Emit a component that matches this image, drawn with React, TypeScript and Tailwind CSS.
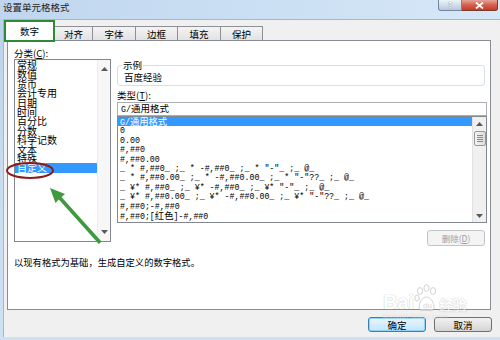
import React from "react";

const mono = "font-['Liberation_Mono','Noto_Sans_CJK_SC',monospace]";

function Up() {
  return (
    <svg width="7" height="4" viewBox="0 0 7 4">
      <polygon points="0,4 7,4 3.5,0" fill="#5a5a5a" />
    </svg>
  );
}
function Down() {
  return (
    <svg width="7" height="4" viewBox="0 0 7 4">
      <polygon points="0,0 7,0 3.5,4" fill="#5a5a5a" />
    </svg>
  );
}

export default function App() {
  const cats = ["常规", "数值", "货币", "会计专用", "日期", "时间", "百分比", "分数", "科学记数", "文本", "特殊", "自定义"];
  const fmts: React.ReactNode[] = [
    <>
      G/<span className="font-['Noto_Sans_CJK_SC',sans-serif] text-[9.3px]">通用格式</span>
    </>,
    "0",
    "0.00",
    "#,##0",
    "#,##0.00",
    '_ * #,##0_ ;_ * -#,##0_ ;_ * "-"_ ;_ @_ ',
    '_ * #,##0.00_ ;_ * -#,##0.00_ ;_ * "-"??_ ;_ @_ ',
    '_ ¥* #,##0_ ;_ ¥* -#,##0_ ;_ ¥* "-"_ ;_ @_ ',
    '_ ¥* #,##0.00_ ;_ ¥* -#,##0.00_ ;_ ¥* "-"??_ ;_ @_ ',
    "#,##0;-#,##0",
    <>
      #,##0;[<span className="font-['Noto_Sans_CJK_SC',sans-serif] text-[9.3px]">红色</span>]-#,##0
    </>,
  ];
  const tabs: [string, string][] = [
    ["对齐", "w-[38px]"],
    ["字体", "w-[43px]"],
    ["边框", "w-[42px]"],
    ["填充", "w-[43px]"],
    ["保护", "w-[42px]"],
  ];

  return (
    <div className="relative w-[500px] h-[340px] overflow-hidden bg-gradient-to-b from-[#b9d1ea] via-[#c8dcf0] to-[#cfe1f3] font-['Noto_Sans_CJK_SC',sans-serif] text-black">
      {/* Title bar */}
      <div className="h-[19px] flex items-start bg-gradient-to-r from-[#c0d6ee] via-[#cadff3] to-[#d6e7f7]">
        <div className="pl-[3px] pt-[1px] text-[9.5px] leading-[12px] text-[#1e1e1e]">设置单元格格式</div>
        <div className="ml-auto mr-[2px] flex">
          <div className="w-[24px] h-[11px] border border-[#71869f] border-t-0 rounded-bl-[3px] bg-gradient-to-b from-[#eef3f8] to-[#b7c8db] flex items-center justify-center text-[8px] leading-none font-bold text-white [text-shadow:0_0_1px_#3b4a5e]">
            ?
          </div>
          <div className="w-[36px] h-[11px] border border-l-0 border-t-0 border-[#7b3b31] rounded-br-[3px] bg-gradient-to-b from-[#e6a496] via-[#d2604c] to-[#c23c27] flex items-center justify-center">
            <svg width="9" height="7" viewBox="0 0 9 7">
              <path d="M1 0.5 L8 6.5 M8 0.5 L1 6.5" stroke="#ffffff" strokeWidth="1.8" />
            </svg>
          </div>
        </div>
      </div>

      {/* Client area */}
      <div className="ml-[3px] h-[318px] bg-[#f0f0f0] border-l border-t border-[#a3b7cd] flex flex-col">
        {/* Tabs */}
        <div className="h-[20px] flex items-start relative z-10">
          <div className="w-[51px] h-[22px] border-2 border-[#2f8a36] bg-white flex items-center justify-center text-[9.5px] leading-[12px]">
            数字
          </div>
          {tabs.map(([t, w], i) => (
            <div
              key={t}
              className={`${w} mt-[6px] h-[14px] border-t border-r ${i === 0 ? "border-l-0" : ""} border-[#8e9096] bg-gradient-to-b from-[#f4f4f4] to-[#e2e2e2] flex items-center justify-center text-[9.5px] leading-[12px]`}
            >
              {t}
            </div>
          ))}
        </div>

        {/* Panel */}
        <div className="ml-[3px] w-[484px] h-[270px] border border-[#898c95] bg-white pl-[6px] pt-[6px] flex flex-col">
          <div className="flex gap-[6px] items-start">
            {/* Left column */}
            <div className="w-[97px] flex flex-col">
              <div className="h-[12px] text-[9.5px] leading-[12px]">
                分类(<span className="underline">C</span>):
              </div>
              <div className="h-[183px] border border-[#828790] flex">
                <div className="w-[82px] flex flex-col">
                  {cats.map((c) => (
                    <div
                      key={c}
                      className={`h-[9.4px] leading-[9.4px] text-[10px] pl-[2px] whitespace-nowrap ${c === "自定义" ? "bg-[#3399ff] text-white" : ""}`}
                    >
                      {c}
                    </div>
                  ))}
                </div>
                <div className="w-[13px] bg-[#f7f7f7] border-l border-[#ececec] flex flex-col justify-between items-center py-[7px]">
                  <Up />
                  <Down />
                </div>
              </div>
            </div>

            {/* Right column */}
            <div className="w-[370px] flex flex-col">
              <div className="relative mt-[18px] w-[368px] h-[21px] border border-[#d5dfe5] rounded-[3px] pt-[5px] pl-[6px] text-[9.5px] leading-[12px]">
                <span className="absolute -top-[7px] left-[4px] bg-white px-[1px] leading-[12px]">示例</span>
                百度经验
              </div>
              <div className="mt-[3px] h-[12px] text-[9.5px] leading-[12px]">
                类型(<span className="underline">T</span>):
              </div>
              <div className="mt-[1px] h-[14px] border border-[#abadb3] pl-[3px] text-[8.3px] leading-[12px] flex items-center">
                <span className={mono}>
                  G/<span className="font-['Noto_Sans_CJK_SC',sans-serif] text-[9.5px]">通用格式</span>
                </span>
              </div>
              <div className="h-[107px] border border-[#828790] flex overflow-hidden">
                <div className="w-[354px] flex flex-col overflow-hidden">
                  {fmts.map((f, i) => (
                    <div
                      key={i}
                      className={`${mono} h-[9.4px] leading-[9.4px] text-[8.3px] pl-[2px] whitespace-pre ${i === 0 ? "bg-[#3399ff] text-white" : ""}`}
                    >
                      {f}
                    </div>
                  ))}
                </div>
                <div className="w-[14px] bg-[#f0f0f0] border-l border-[#e2e2e2] flex flex-col items-center">
                  <div className="h-[14px] flex items-center justify-center">
                    <Up />
                  </div>
                  <div className="w-[12px] h-[15px] rounded-[2px] border border-[#9a9a9a] bg-gradient-to-r from-[#f3f3f3] to-[#dcdcdc] flex flex-col items-center justify-center gap-[1px]">
                    <div className="w-[6px] h-px bg-[#8a8a8a]" />
                    <div className="w-[6px] h-px bg-[#8a8a8a]" />
                    <div className="w-[6px] h-px bg-[#8a8a8a]" />
                    <div className="w-[6px] h-px bg-[#8a8a8a]" />
                  </div>
                  <div className="flex-1" />
                  <div className="h-[13px] flex items-center justify-center">
                    <Down />
                  </div>
                </div>
              </div>
              <div className="mt-[7px] mr-[2px] self-end w-[58px] h-[16px] border border-[#c2c4c8] rounded-[3px] bg-[#f4f4f4] flex items-center justify-center text-[8.5px] leading-[12px] text-[#a0a0a0]">
                删除(<span className="underline">D</span>)
              </div>
            </div>
          </div>
          <div className="mt-[10px] text-[9.3px] leading-[12px] whitespace-nowrap">
            以现有格式为基础，生成自定义的数字格式。
          </div>
        </div>

        {/* Buttons */}
        <div className="mt-[7px] pr-[8px] flex justify-end gap-[8px]">
          <div className="w-[58px] h-[15px] border border-[#3c7fb1] rounded-[3px] bg-gradient-to-b from-[#eaf6fd] to-[#bee6fd] shadow-[inset_0_0_0_1px_#8fd2f5] flex items-center justify-center text-[9.5px] leading-[12px]">
            确定
          </div>
          <div className="w-[58px] h-[15px] border border-[#707070] rounded-[3px] bg-gradient-to-b from-[#f2f2f2] to-[#d4d4d4] flex items-center justify-center text-[9.5px] leading-[12px]">
            取消
          </div>
        </div>
      </div>

      {/* Annotations */}
      <svg className="absolute left-0 top-0 pointer-events-none" width="500" height="340" viewBox="0 0 500 340">
        <ellipse cx="30" cy="170.5" rx="23" ry="7.5" fill="none" stroke="#8b1a1a" strokeWidth="2" />
        <polygon points="100,243 101.5,241.6 61.5,197 65,194 50,188 55.5,203 58.8,199.6 98.8,244" fill="#3f9a3f" />
      </svg>

      {/* Watermark */}
      <div className="absolute left-[383px] top-[284px] pointer-events-none flex flex-col items-start opacity-50">
        <div className="flex items-end">
          <span className="font-['Liberation_Sans',sans-serif] text-[20px] leading-[20px] font-bold text-white [text-shadow:0_0_1px_#9a9a9a,0_0_1px_#9a9a9a]">Bai</span>
          <svg width="25" height="28" viewBox="0 0 25 28">
            <g fill="#ffffff" stroke="#a8a8a8" strokeWidth="1">
              <ellipse cx="6" cy="7" rx="2.6" ry="3.4" />
              <ellipse cx="12.5" cy="4" rx="2.6" ry="3.4" />
              <ellipse cx="19" cy="7" rx="2.6" ry="3.4" />
              <ellipse cx="3" cy="14" rx="2.2" ry="3" />
              <path d="M5 24 C5 17 9 13 12.5 13 C16 13 20 17 20 24 C20 27 16 27 12.5 26 C9 27 5 27 5 24 Z" />
            </g>
            <text x="9" y="24" fontSize="8" fill="#b0b0b0" fontFamily="Liberation Sans">du</text>
          </svg>
          <span className="text-[14px] leading-[16px] font-bold text-white [text-shadow:0_0_1px_#9a9a9a,0_0_1px_#9a9a9a]">经验</span>
        </div>
        <div className="font-['Liberation_Sans',sans-serif] text-[8px] leading-[10px] text-white/70 [text-shadow:0_0_1px_#b0b0b0]">
          jingyan.baidu.com
        </div>
      </div>
    </div>
  );
}
